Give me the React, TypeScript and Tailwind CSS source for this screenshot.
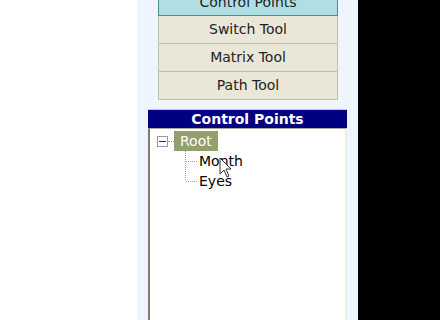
const font = { fontFamily: '"DejaVu Sans", Verdana, sans-serif' };

function ToolButton({ label, active, first }: { label: string; active?: boolean; first?: boolean }) {
  return (
    <div
      className={
        'h-[28px] flex items-center justify-center text-[14px] text-[#222] border ' +
        (first ? '' : 'border-t-0 ') +
        (active
          ? 'bg-[#b0dfe3] border-[#4f8e96]'
          : 'bg-[#ebe7d8] border-[#c2bea9]')
      }
    >
      {label}
    </div>
  );
}

function Cursor() {
  return (
    <svg className="absolute left-[219px] top-[157px]" width="14" height="22" viewBox="0 0 14 22">
      <path
        d="M1 1 L1 17 L5 13 L8 20 L10 19 L7 12 L12 12 Z"
        fill="white"
        stroke="#333"
        strokeWidth="1"
        strokeLinejoin="round"
      />
    </svg>
  );
}

export default function App() {
  return (
    <div className="relative w-[440px] h-[320px] flex bg-white overflow-hidden" style={font}>
      <div className="w-[137px] bg-white" />
      <div className="w-[221px] bg-[#eef5fd] flex flex-col">
        {/* tool buttons */}
        <div className="ml-[21px] w-[180px] -mt-[12px] flex flex-col">
          <ToolButton label="Control Points" active first />
          <ToolButton label="Switch Tool" />
          <ToolButton label="Matrix Tool" />
          <ToolButton label="Path Tool" />
        </div>

        {/* control points panel */}
        <div className="ml-[11px] mt-[9px] w-[199px] flex flex-col flex-1">
          <div className="h-[19px] bg-[#000080] border-t border-[#c9c9c9] flex items-center justify-center text-white font-bold text-[14px]">
            Control Points
          </div>
          <div className="flex-1 bg-white border-l-2 border-l-[#7c7a72] border-r-2 border-r-[#efeee8] border-t border-t-[#aca899] pt-[2px]">
            <div className="flex items-center h-[20px] ml-[7px]">
              <div className="w-[11px] h-[11px] border border-[#9a9a9a] bg-white flex items-center justify-center">
                <div className="w-[7px] h-[1px] bg-[#333]" />
              </div>
              <div className="w-[6px] border-t border-dotted border-[#999]" />
              <div className="h-[20px] px-[6px] bg-[#939f6c] text-white text-[14px] flex items-center">Root</div>
            </div>
            <div className="flex ml-[35px]">
              <svg width="14" height="31" viewBox="0 0 14 31" className="shrink-0">
                <line x1="0.5" y1="0" x2="0.5" y2="30" stroke="#a0a0a0" strokeDasharray="1 1" />
                <line x1="1" y1="10.5" x2="13" y2="10.5" stroke="#a0a0a0" strokeDasharray="1 1" />
                <line x1="1" y1="30.5" x2="13" y2="30.5" stroke="#a0a0a0" strokeDasharray="1 1" />
              </svg>
              <div className="flex flex-col text-[14px] text-black">
                <div className="h-[20px] flex items-center">Month</div>
                <div className="h-[20px] flex items-center">Eyes</div>
              </div>
            </div>
          </div>
        </div>
      </div>
      <div className="flex-1 bg-black" />
      <Cursor />
    </div>
  );
}
